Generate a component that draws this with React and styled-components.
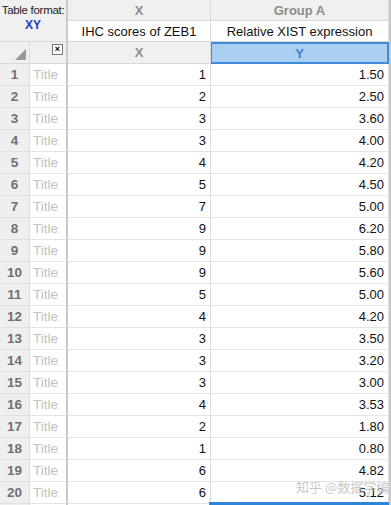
import React from 'react';
import styled, { createGlobalStyle } from 'styled-components';

const GlobalStyle = createGlobalStyle`
  html, body { margin: 0; padding: 0; background: #fff; overflow: hidden; }
  body { font-family: "Liberation Sans", Arial, sans-serif; }
`;

const rows = [
  [1, '1.50'], [2, '2.50'], [3, '3.60'], [3, '4.00'], [4, '4.20'],
  [5, '4.50'], [7, '5.00'], [9, '6.20'], [9, '5.80'], [9, '5.60'],
  [5, '5.00'], [4, '4.20'], [3, '3.50'], [3, '3.20'], [3, '3.00'],
  [4, '3.53'], [2, '1.80'], [1, '0.80'], [6, '4.82'], [6, '5.12'],
];

const COLS = '30px 38px 143px 178px 2px';

const Sheet = styled.div`
  position: relative;
  width: 391px;
  height: 505px;
  overflow: hidden;
  display: grid;
  grid-template-columns: ${COLS};
  grid-template-rows: 21px 21px 22px repeat(21, 22px);
  font-size: 13px;
  color: #111;
`;

const Cell = styled.div`
  box-sizing: border-box;
  display: flex;
  align-items: center;
  justify-content: ${p => p.$align || 'flex-start'};
  padding: 0 ${p => (p.$align === 'flex-end' ? '4px' : '3px')};
  background: ${p => p.$bg || '#fff'};
  border-right: ${p => p.$thick ? '2px solid #c9c9c9' : '1px solid #dcdcdc'};
  border-bottom: 1px solid #e4e4e4;
  white-space: nowrap;
  overflow: hidden;
`;

const FormatCell = styled(Cell)`
  grid-row: 1 / span 2;
  grid-column: 1 / span 2;
  flex-direction: column;
  justify-content: flex-start;
  align-items: center;
  padding-top: 4px;
  background: #f0f0f0;
  border-right: 2px solid #c9c9c9;
  border-bottom: 1px solid #d8d8d8;
`;

const FormatLabel = styled.span`
  font-size: 11.5px;
  color: #222;
  letter-spacing: -0.3px;
`;

const FormatValue = styled.span`
  font-size: 12px;
  font-weight: bold;
  color: #1a3fc4;
  margin-top: 2px;
`;

const HeadCell = styled(Cell)`
  justify-content: center;
  background: #f0f0f0;
  color: #8c8c8c;
  font-weight: bold;
  border-bottom: 1px solid #d8d8d8;
`;

const TitleHead = styled(Cell)`
  justify-content: center;
  color: #111;
  border-bottom: 1px solid #d8d8d8;
`;

const SelHead = styled(Cell)`
  justify-content: center;
  background: #a9cff2;
  color: #3c7fd0;
  font-weight: bold;
  border: 2px solid #3f8bd8;
  border-left-width: 1px;
`;

const Corner = styled(Cell)`
  position: relative;
  background: #f0f0f0;
  border-bottom: 1px solid #d8d8d8;
`;

const Triangle = styled.div`
  position: absolute;
  right: 3px;
  bottom: 3px;
  width: 0;
  height: 0;
  border-left: 11px solid transparent;
  border-bottom: 11px solid #9a9a9a;
`;

const CloseBox = styled.div`
  position: absolute;
  right: 3px;
  top: 2px;
  width: 9px;
  height: 9px;
  border: 1px solid #777;
  background: #fff;
  font-size: 9px;
  line-height: 9px;
  font-weight: bold;
  text-align: center;
  color: #000;
`;

const RowNum = styled(Cell)`
  justify-content: center;
  background: #efefef;
  color: #707070;
  font-weight: bold;
  font-size: 13.5px;
  border-bottom: 1px solid #e0e0e0;
`;

const RowTitle = styled(Cell)`
  color: #c2c2c2;
  font-size: 13.5px;
`;

const Edge = styled.div`
  background: #c9c9c9;
`;

const Selection = styled.div`
  grid-column: 4;
  margin-top: -2px;
  margin-left: -2px;
  height: 3px;
  background: #2f86d8;
`;

const Watermark = styled.div`
  position: absolute;
  left: 296px;
  top: 479px;
  font-family: "Noto Sans CJK SC", sans-serif;
  font-size: 13px;
  line-height: 16px;
  color: rgba(150, 150, 150, 0.55);
  text-shadow: 0 0 2px #fff;
  pointer-events: none;
`;

export default function App() {
  return (
    <>
      <GlobalStyle />
      <Sheet>
        <FormatCell>
          <FormatLabel>Table format:</FormatLabel>
          <FormatValue>XY</FormatValue>
        </FormatCell>
        <HeadCell>X</HeadCell>
        <HeadCell>Group A</HeadCell>
        <Edge />
        <TitleHead>IHC scores of ZEB1</TitleHead>
        <TitleHead>Relative XIST expression</TitleHead>
        <Edge />
        <Corner><Triangle /></Corner>
        <Corner $thick><CloseBox>×</CloseBox></Corner>
        <HeadCell>X</HeadCell>
        <SelHead>Y</SelHead>
        <Edge />
        {rows.map(([x, y], i) => (
          <React.Fragment key={i}>
            <RowNum>{i + 1}</RowNum>
            <RowTitle $thick>Title</RowTitle>
            <Cell $align="flex-end">{x}</Cell>
            <Cell $align="flex-end">{y}</Cell>
            <Edge />
          </React.Fragment>
        ))}
        <RowNum />
        <RowTitle $thick />
        <Cell />
        <Selection />
        <Edge />
        <Watermark>知乎 @数据学编</Watermark>
      </Sheet>
    </>
  );
}
